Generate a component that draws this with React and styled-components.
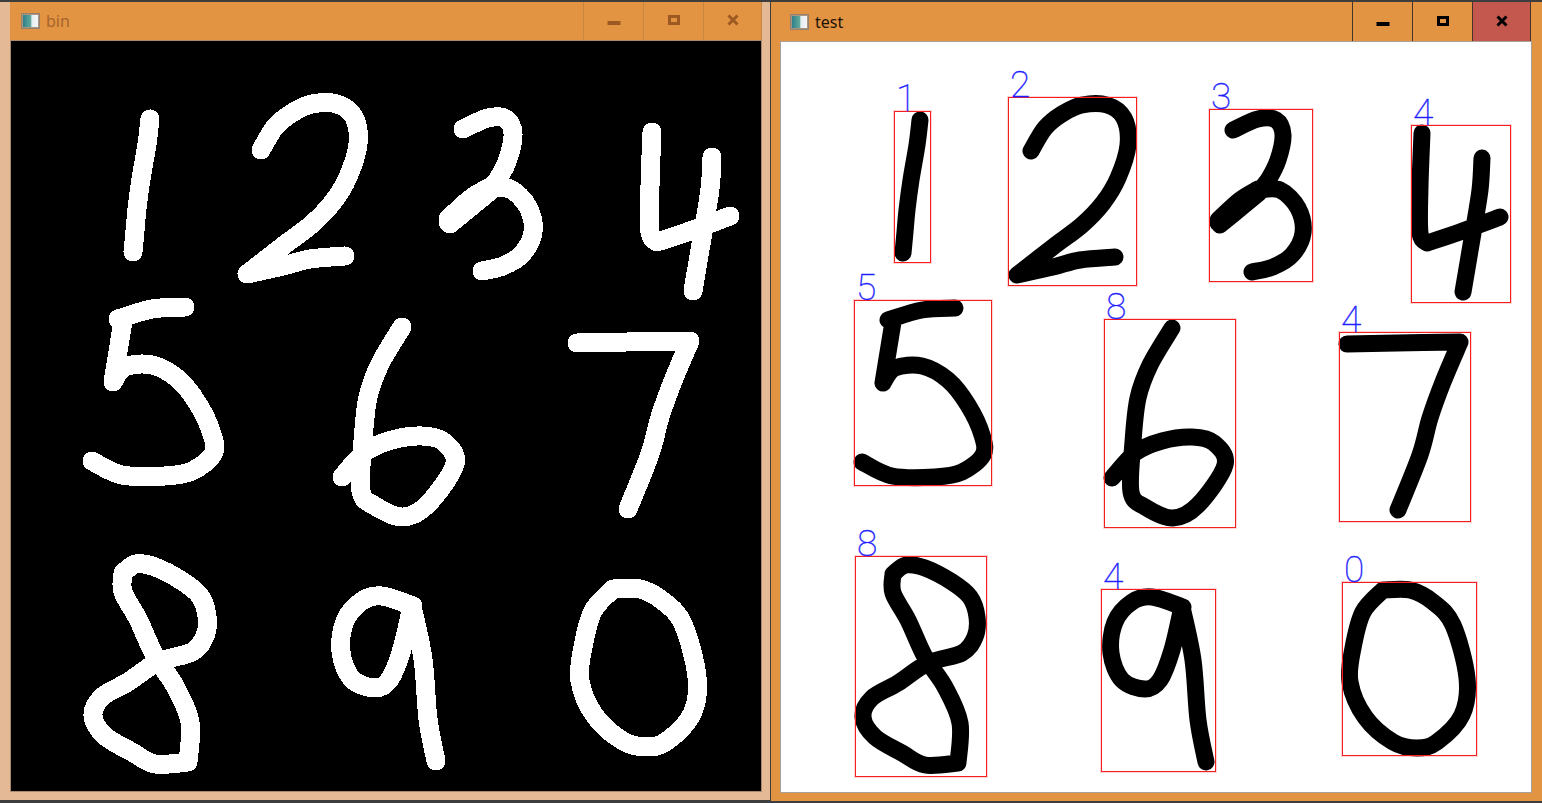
import React from 'react';
import styled, { createGlobalStyle } from 'styled-components';

const GlobalStyle = createGlobalStyle`
  html, body {
    margin: 0;
    padding: 0;
    background: #3d3d3d;
    overflow: hidden;
  }
`;

const Desktop = styled.div`
  display: flex;
  gap: 1px;
  width: 1542px;
  height: 803px;
  padding-top: 2px;
  box-sizing: border-box;
  align-items: flex-start;
`;

const Frame = styled.div`
  flex: none;
  box-sizing: border-box;
  width: ${(p) => (p.$active ? 771 : 770)}px;
  height: ${(p) => (p.$active ? 799 : 798)}px;
  padding: ${(p) => (p.$active ? '0 0 9px 0' : '0 8px 9px 10px')};
  background: ${(p) => (p.$active ? '#e39443' : '#e4b996')};
`;

const TitleBar = styled.div`
  display: flex;
  align-items: stretch;
  box-sizing: border-box;
  height: ${(p) => (p.$active ? 39 : 38)}px;
  padding-left: ${(p) => (p.$active ? 19 : 11)}px;
  padding-right: ${(p) => (p.$active ? 11 : 0)}px;
  background: #e39443;
`;

const Caption = styled.div`
  flex: 1;
  display: flex;
  align-items: center;
  gap: 6px;
  font-family: 'Noto Sans', sans-serif;
  font-size: 16px;
  color: ${(p) => (p.$active ? '#1d1208' : '#a5642c')};
`;

const WindowButton = styled.div`
  width: 59px;
  display: flex;
  align-items: center;
  justify-content: center;
  box-sizing: content-box;
  margin-bottom: ${(p) => (p.$active ? -1 : 0)}px;
  border-left: 1px solid ${(p) => (p.$active ? '#43352a' : '#c78540')};
  border-bottom: 1px solid ${(p) => (p.$active ? '#43352a' : 'transparent')};
  background: ${(p) => (p.$close ? '#c4574e' : 'transparent')};
  color: ${(p) => (p.$active ? '#000' : '#9c5a22')};

  &:last-child {
    width: 57px;
    border-right: 1px solid ${(p) => (p.$active ? '#43352a' : '#c78540')};
  }
`;

const Canvas = styled.div`
  position: relative;
  width: 750px;
  height: 750px;
  margin: ${(p) => (p.$active ? '1px 11px 0 10px' : '1px 1px 0 1px')};
  background: ${(p) => (p.$active ? '#fff' : '#000')};
  outline: 1px solid ${(p) => (p.$active ? '#a8a29a' : '#a98a6c')};
`;

const DigitLayer = styled.svg`
  display: block;
  width: 750px;
  height: 750px;
`;

const DetectBox = styled.div`
  position: absolute;
  box-sizing: border-box;
  left: ${(p) => p.$x0 - 781}px;
  top: ${(p) => p.$y0 - 42}px;
  width: ${(p) => p.$x1 - p.$x0}px;
  height: ${(p) => p.$y1 - p.$y0}px;
  border: 1px solid #f42020;
  box-shadow: 0 0 0 1px rgba(255, 60, 60, 0.22);
`;

const DetectLabel = styled.span`
  position: absolute;
  left: 1px;
  bottom: calc(100% - 5px);
  font-family: 'Roboto', sans-serif;
  font-weight: 100;
  font-size: 37px;
  line-height: 37px;
  color: #1f1fff;
  -webkit-text-stroke: 0.4px #1f1fff;
`;

// centre lines of the hand written digits, in screen coords of the right window
const digitStrokes = [
  [[[920, 120], [917, 145], [911, 180], [907, 210], [905, 232], [903, 253]]],
  [[[1031, 151], [1045, 128], [1062, 114], [1082, 105], [1107, 105], [1124, 118], [1128, 145], [1118, 178], [1103, 203], [1082, 225], [1053, 247], [1017, 275]],
   [[1017, 275], [1053, 267], [1080, 260], [1115, 257]]],
  [[[1233, 130], [1258, 119], [1276, 120], [1283, 135], [1278, 160], [1268, 180], [1258, 191], [1240, 203], [1218, 223]],
   [[1258, 189], [1240, 200], [1218, 220]], [[1259, 193], [1242, 207], [1220, 225]],
   [[1258, 190], [1280, 190], [1298, 208], [1303, 233], [1292, 255], [1273, 267], [1252, 272]]],
  [[[1422, 133], [1420, 187], [1420, 233], [1427, 243]],
   [[1427, 243], [1460, 232], [1500, 217]],
   [[1482, 158], [1480, 190], [1473, 233], [1463, 292]]],
  [[[955, 308], [922, 310], [888, 320]],
   [[893, 322], [883, 383]],
   [[883, 383], [895, 368], [922, 366], [948, 380], [968, 405], [982, 435], [983, 455], [962, 472], [935, 477], [892, 476], [862, 462]]],
  [[[1172, 328], [1150, 365], [1138, 398], [1133, 442], [1131, 492], [1145, 507], [1173, 518], [1198, 505], [1225, 465], [1214, 443], [1192, 437], [1162, 441], [1135, 453], [1112, 478]]],
  [[[1347, 344], [1397, 343], [1460, 342]],
   [[1460, 342], [1443, 382], [1430, 418], [1420, 455], [1398, 510]]],
  [[[893, 574], [906, 565], [925, 568], [952, 582], [970, 597], [977, 617], [975, 637], [962, 653], [928, 663], [898, 683], [872, 698], [863, 717], [875, 737], [902, 753], [925, 765], [958, 763]],
   [[958, 763], [960, 723], [945, 687], [925, 657], [908, 620], [893, 593], [893, 574]]],
  [[[1183, 607], [1152, 597], [1132, 602], [1115, 622], [1111, 653], [1122, 680], [1145, 689], [1160, 680], [1172, 650], [1182, 607]],
   [[1182, 607], [1193, 660], [1198, 720], [1206, 762]]],
  [[[1383, 590], [1410, 590], [1433, 602], [1453, 625], [1467, 678], [1462, 715], [1437, 742], [1417, 748], [1393, 742], [1365, 717], [1350, 682], [1353, 648], [1363, 612], [1383, 590]]],
];

const detections = [
  { label: '1', box: [894, 111, 931, 263] },
  { label: '2', box: [1008, 97, 1137, 286] },
  { label: '3', box: [1209, 109, 1313, 282] },
  { label: '4', box: [1411, 125, 1511, 303] },
  { label: '5', box: [854, 300, 992, 486] },
  { label: '8', box: [1104, 319, 1236, 528] },
  { label: '4', box: [1339, 332, 1471, 522] },
  { label: '8', box: [855, 556, 987, 777] },
  { label: '4', box: [1101, 589, 1216, 772] },
  { label: '0', box: [1342, 582, 1477, 756] },
];

// smooth line through the points (catmull-rom turned into beziers)
function smoothPath(pts) {
  let d = `M${pts[0][0]} ${pts[0][1]}`;
  for (let i = 0; i < pts.length - 1; i++) {
    const p0 = pts[i - 1] || pts[i];
    const p1 = pts[i];
    const p2 = pts[i + 1];
    const p3 = pts[i + 2] || p2;
    const c1x = p1[0] + (p2[0] - p0[0]) / 6;
    const c1y = p1[1] + (p2[1] - p0[1]) / 6;
    const c2x = p2[0] - (p3[0] - p1[0]) / 6;
    const c2y = p2[1] - (p3[1] - p1[1]) / 6;
    d += ` C${c1x} ${c1y} ${c2x} ${c2y} ${p2[0]} ${p2[1]}`;
  }
  return d;
}

const allDigits = digitStrokes.flat().map(smoothPath).join(' ');

function AppIcon() {
  return (
    <svg width="19" height="16" viewBox="0 0 19 16">
      <defs>
        <linearGradient id="iconFill" x1="0" x2="1" y1="0" y2="0">
          <stop offset="0" stopColor="#2f7f8a" />
          <stop offset="0.5" stopColor="#5fa89a" />
          <stop offset="0.6" stopColor="#e6eef0" />
          <stop offset="1" stopColor="#f4f6f8" />
        </linearGradient>
      </defs>
      <rect x="0.5" y="0.5" width="18" height="15" fill="#a99580" stroke="#94806c" />
      <rect x="2" y="2" width="15" height="12" fill="url(#iconFill)" />
    </svg>
  );
}

function MinimizeIcon() {
  return (
    <svg width="14" height="14" viewBox="0 0 14 14">
      <rect x="0.5" y="7" width="13" height="4" fill="currentColor" />
    </svg>
  );
}

function RestoreIcon() {
  return (
    <svg width="14" height="14" viewBox="0 0 14 14">
      <rect x="2.5" y="2.5" width="9" height="7" fill="none" stroke="currentColor" strokeWidth="3" />
    </svg>
  );
}

function CloseIcon() {
  return (
    <svg width="14" height="14" viewBox="0 0 14 14">
      <path d="M2.5 1.5L11.5 10.5M11.5 1.5L2.5 10.5" fill="none" stroke="currentColor" strokeWidth="3" />
    </svg>
  );
}

function AppWindow({ title, active, children }) {
  return (
    <Frame $active={active}>
      <TitleBar $active={active}>
        <Caption $active={active}>
          <AppIcon />
          {title}
        </Caption>
        <WindowButton $active={active}><MinimizeIcon /></WindowButton>
        <WindowButton $active={active}><RestoreIcon /></WindowButton>
        <WindowButton $active={active} $close={active}><CloseIcon /></WindowButton>
      </TitleBar>
      <Canvas $active={active}>{children}</Canvas>
    </Frame>
  );
}

export default function App() {
  return (
    <Desktop>
      <GlobalStyle />
      <AppWindow title="bin">
        <DigitLayer viewBox="781 42 750 750">
          <path d={allDigits} fill="none" stroke="#fff" strokeWidth="19" strokeLinecap="round" strokeLinejoin="round" shapeRendering="crispEdges" />
        </DigitLayer>
      </AppWindow>
      <AppWindow title="test" active>
        <DigitLayer viewBox="781 42 750 750">
          <path d={allDigits} fill="none" stroke="#000" strokeWidth="17" strokeLinecap="round" strokeLinejoin="round" />
        </DigitLayer>
        {detections.map(({ label, box }) => (
          <DetectBox key={box.join()} $x0={box[0]} $y0={box[1]} $x1={box[2]} $y1={box[3]}>
            <DetectLabel>{label}</DetectLabel>
          </DetectBox>
        ))}
      </AppWindow>
    </Desktop>
  );
}
